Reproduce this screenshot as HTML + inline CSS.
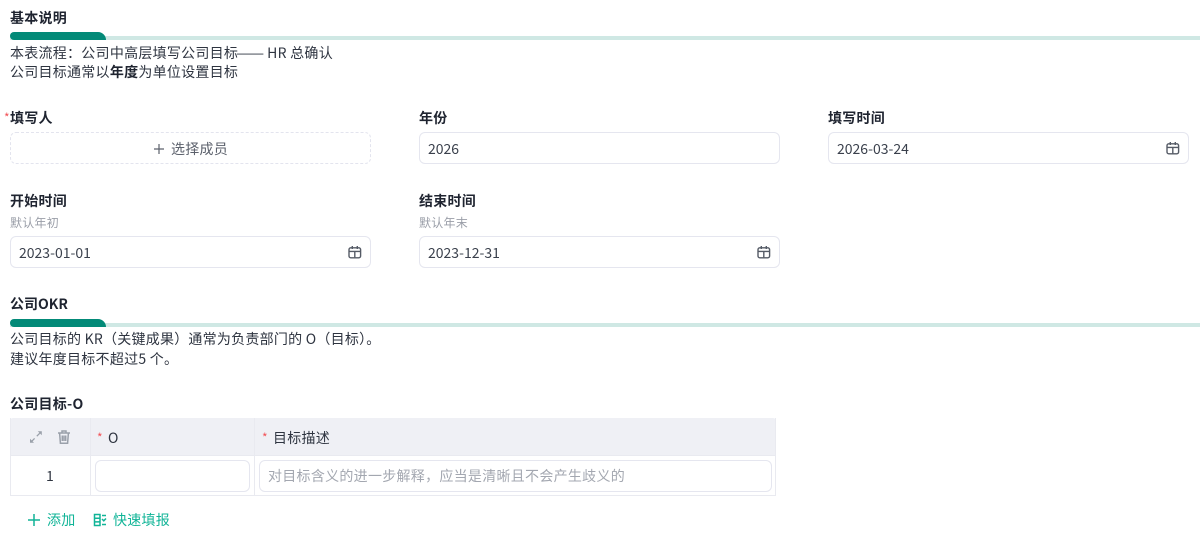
<!DOCTYPE html>
<html><head><meta charset="utf-8"><style>
*{box-sizing:border-box}
html,body{margin:0;padding:0;width:1200px;height:537px;overflow:hidden;background:#fff}
body{font-family:"Noto Sans CJK SC","Liberation Sans",sans-serif;font-size:14px;color:#2e3440;position:relative}
.a{position:absolute;white-space:nowrap;line-height:20px;letter-spacing:.26px}
.n{letter-spacing:0}
.b{font-weight:700;color:#1f2430}
.bar{position:absolute;left:10px;right:0;height:4px;background:#cfe8e4}
.bar2{position:absolute;left:10px;width:96px;height:8px;background:#038a78;border-radius:4px 8px 0 4px}
.in{position:absolute;width:361px;height:32px;border:1px solid #e5e6ef;border-radius:6px;background:#fff;padding:0 8px;line-height:32px;font-size:14px;color:#3a404c}
.in svg{position:absolute;right:8px;top:8px}
.s{font-size:12px;color:#9a9ea8;line-height:16px}
.r{color:#f2555a}
.cell{position:absolute;background:#eff0f5}
.ln{position:absolute;background:#e9eaf0}
.d{display:inline-block;width:29px;letter-spacing:0;transform-origin:left center;transform:translateX(-2px) scaleX(1.2)}
</style></head><body>
<div class="a b" style="left:10px;top:8px">基本说明</div>
<div class="bar" style="top:36px"></div><div class="bar2" style="top:32px"></div>
<div class="a" style="left:10px;top:43px">本表流程：公司中高层填写公司目标<span class="d">——</span>HR 总确认</div>
<div class="a" style="left:10px;top:62px">公司目标通常以<b style="color:#1f2430">年度</b>为单位设置目标</div>

<div class="a r" style="left:4px;top:108px;font-size:12px">*</div>
<div class="a b" style="left:10px;top:108px">填写人</div>
<div class="in" style="left:10px;top:132px;border:1px dashed #e3e4ee"></div>
<svg class="a" style="left:153px;top:143px" width="12" height="12" viewBox="0 0 12 12"><path d="M6 1v10M1 6h10" stroke="#5c616c" stroke-width="1.2" fill="none"/></svg>
<div class="a" style="left:171px;top:139px;color:#5c616c">选择成员</div>

<div class="a b" style="left:419px;top:108px">年份</div>
<div class="in" style="left:419px;top:132px">2026</div>
<div class="a b" style="left:828px;top:108px">填写时间</div>
<div class="in" style="left:828px;top:132px">2026-03-24<svg width="14" height="14" viewBox="0 0 14 14" fill="none" stroke="#555b66" stroke-width="1.4"><rect x="1" y="2.8" width="11.6" height="10" rx="1.8"/><path d="M1 6.4h11.6M4.3 1v3M9.3 1v3M6.8 6.4v6"/></svg></div>

<div class="a b" style="left:10px;top:191px">开始时间</div>
<div class="a s" style="left:10px;top:215px">默认年初</div>
<div class="in" style="left:10px;top:236px">2023-01-01<svg width="14" height="14" viewBox="0 0 14 14" fill="none" stroke="#555b66" stroke-width="1.4"><rect x="1" y="2.8" width="11.6" height="10" rx="1.8"/><path d="M1 6.4h11.6M4.3 1v3M9.3 1v3M6.8 6.4v6"/></svg></div>
<div class="a b" style="left:419px;top:191px">结束时间</div>
<div class="a s" style="left:419px;top:215px">默认年末</div>
<div class="in" style="left:419px;top:236px">2023-12-31<svg width="14" height="14" viewBox="0 0 14 14" fill="none" stroke="#555b66" stroke-width="1.4"><rect x="1" y="2.8" width="11.6" height="10" rx="1.8"/><path d="M1 6.4h11.6M4.3 1v3M9.3 1v3M6.8 6.4v6"/></svg></div>

<div class="a b n" style="left:10px;top:294px">公司OKR</div>
<div class="bar" style="top:323px"></div><div class="bar2" style="top:319px"></div>
<div class="a" style="left:10px;top:329px;letter-spacing:.24px">公司目标的 KR（关键成果）通常为负责部门的 O（目标）。</div>
<div class="a" style="left:10px;top:349px">建议年度目标不超过5 个。</div>

<div class="a b" style="left:10px;top:394px">公司目标-O</div>
<div class="cell" style="left:10px;top:418px;width:766px;height:37px;border-radius:3px 3px 0 0"></div>
<div class="ln" style="left:10px;top:418px;width:1px;height:78px"></div>
<div class="ln" style="left:775px;top:418px;width:1px;height:78px"></div>
<div class="ln" style="left:90px;top:418px;width:1px;height:78px"></div>
<div class="ln" style="left:254px;top:418px;width:1px;height:78px"></div>
<div class="ln" style="left:10px;top:495px;width:766px;height:1px"></div>
<div class="ln" style="left:10px;top:455px;width:766px;height:1px"></div>
<svg class="a" style="left:29px;top:430px" width="14" height="14" viewBox="0 0 14 14" fill="none" stroke="#9aa0aa" stroke-width="1.3"><path d="M7.8 6.2l3-3M5.6 8.4l-3 3"/><path d="M8.8 1.2h4v4zM1 8.8v4h4z" fill="#9aa0aa" stroke="none"/></svg>
<svg class="a" style="left:57px;top:430px" width="14" height="14" viewBox="0 0 14 14" fill="none" stroke="#9aa0aa" stroke-width="1.5"><path d="M1 3h12M5 3V1h4V3M2.6 3l.8 10.2h7.2l.8-10.2M5.3 5.5v5.5M7 5.5v5.5M8.7 5.5v5.5"/></svg>
<div class="a r" style="left:97px;top:428px;font-size:12px">*</div>
<div class="a" style="left:108px;top:428px">O</div>
<div class="a r" style="left:262px;top:428px;font-size:12px">*</div>
<div class="a" style="left:273px;top:428px">目标描述</div>
<div class="a" style="left:46px;top:466px">1</div>
<div class="in" style="left:95px;top:460px;width:155px;height:32px"></div>
<div class="in" style="left:259px;top:460px;width:513px;height:32px;color:#a3a7b0;line-height:31px;letter-spacing:.28px">对目标含义的进一步解释，应当是清晰且不会产生歧义的</div>

<svg class="a" style="left:27px;top:513px" width="14" height="14" viewBox="0 0 14 14"><path d="M7 1v12M1 7h12" stroke="#10b497" stroke-width="1.5" fill="none"/></svg>
<div class="a" style="left:47px;top:510px;color:#10b497">添加</div>
<svg class="a" style="left:93px;top:513px" width="14" height="14" viewBox="0 0 14 14" fill="none" stroke="#10b497" stroke-width="1.5"><path d="M1.5 1.5h5.5v11H1.5zM1.5 5.2h5.5M1.5 8.9h5.5M9 2.5h4M9 6l1.8 1.8L13 5.5M9 11.5h4"/></svg>
<div class="a" style="left:113px;top:510px;color:#10b497">快速填报</div>
</body></html>
